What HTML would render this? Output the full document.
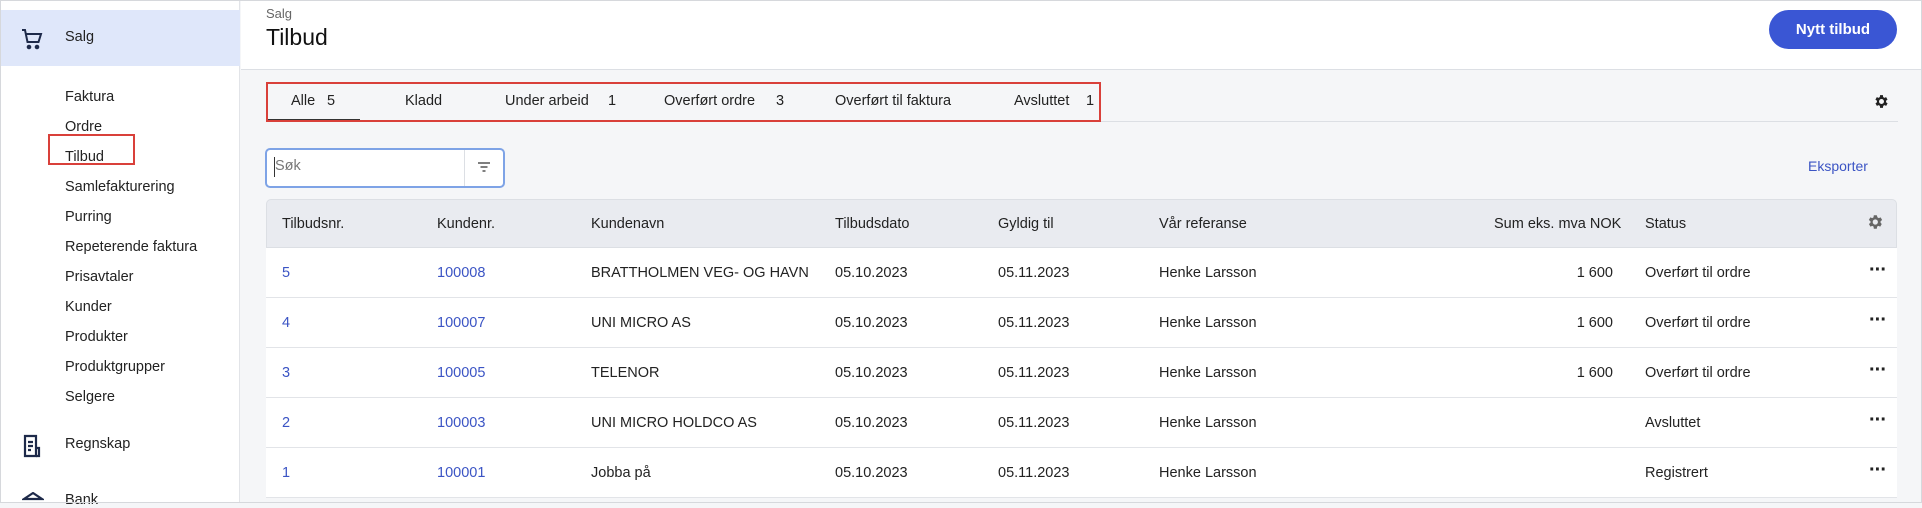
<!DOCTYPE html>
<html><head><meta charset="utf-8"><style>
*{box-sizing:border-box;margin:0;padding:0}
body{width:1922px;height:503px;overflow:hidden;font-family:"Liberation Sans",sans-serif;background:#f5f6f8;color:#222;position:relative;font-size:14.5px}
.abs{position:absolute;white-space:nowrap}
.side{position:absolute;left:0;top:0;width:240px;height:503px;background:#fff;border-right:1px solid #e2e4e8}
.main-head{position:absolute;left:241px;top:0;right:0;height:70px;background:#fff;border-bottom:1px solid #dcdfe4}
.link{color:#3b54c4}
.row{position:absolute;left:266px;width:1631px;height:50px;background:#fff;border-bottom:1px solid #e2e4e8}
.row span{position:absolute;top:17px}
.row span.dots{left:1603px;top:15px;font-size:20px;font-weight:bold;letter-spacing:-1px;line-height:14px}
</style></head><body>
<div style="position:absolute;inset:0;border:1px solid #d6d8dc;z-index:10;pointer-events:none"></div>
<div class="side">
 <div style="position:absolute;left:0;top:10px;width:240px;height:56px;background:#dfe7fa"></div>
 <svg class="abs" style="left:20px;top:27px" width="24" height="24" viewBox="0 0 24 24" fill="none" stroke="#1e2a4a" stroke-width="2"><path d="M2 3h3l2.5 12h11L21 7H6.5"/><path d="M7 15h12"/><circle cx="9" cy="20" r="1.3" fill="#1e2a4a"/><circle cx="17" cy="20" r="1.3" fill="#1e2a4a"/></svg>
 <div class="abs" style="left:65px;top:29px">Salg</div>
 <div class="abs" style="left:65px;top:82px;line-height:30px">Faktura<br>Ordre<br>Tilbud<br>Samlefakturering<br>Purring<br>Repeterende faktura<br>Prisavtaler<br>Kunder<br>Produkter<br>Produktgrupper<br>Selgere</div>
 <div class="abs" style="left:48px;top:134px;width:87px;height:31px;border:2px solid #d9403a"></div>
 <svg class="abs" style="left:22px;top:434px" width="20" height="24" viewBox="0 0 20 24" fill="none" stroke="#1e2a4a" stroke-width="2.2"><path d="M3 2h11v20H3z"/><path d="M6 8h5M6 12h5M6 16h3M14 14h3v8h-3"/></svg>
 <div class="abs" style="left:65px;top:436px">Regnskap</div>
 <svg class="abs" style="left:22px;top:492px" width="22" height="12" viewBox="0 0 22 12"><path d="M11 1L2 7h18z" fill="none" stroke="#1e2a4a" stroke-width="2.2"/></svg>
 <div class="abs" style="left:65px;top:492px">Bank</div>
</div>
<div class="main-head">
 <div class="abs" style="left:25px;top:6px;font-size:13px;color:#666">Salg</div>
 <div class="abs" style="left:25px;top:24px;font-size:23px;color:#111">Tilbud</div>
 <div class="abs" style="left:1528px;top:10px;width:128px;height:39px;border-radius:20px;background:#3a56d4;color:#fff;font-weight:bold;font-size:15px;text-align:center;line-height:39px">Nytt tilbud</div>
</div>
<div class="abs" style="left:266px;top:121px;width:1632px;border-top:1px solid #dcdfe4"></div>
<div class="abs" style="left:266px;top:119px;width:94px;border-top:2px solid #333"></div>
<div class="abs" style="left:266px;top:82px;width:835px;height:40px;border:2px solid #d9403a"></div>
<div class="abs" style="top:93px;left:291px">Alle</div><div class="abs" style="top:93px;left:327px">5</div>
<div class="abs" style="top:93px;left:405px">Kladd</div>
<div class="abs" style="top:93px;left:505px">Under arbeid</div><div class="abs" style="top:93px;left:608px">1</div>
<div class="abs" style="top:93px;left:664px">Overført ordre</div><div class="abs" style="top:93px;left:776px">3</div>
<div class="abs" style="top:93px;left:835px">Overført til faktura</div>
<div class="abs" style="top:93px;left:1014px">Avsluttet</div><div class="abs" style="top:93px;left:1086px">1</div>
<svg class="abs" style="left:1873px;top:93px" width="17" height="17" viewBox="0 0 24 24"><path fill="#222" d="M19.4 13a7.5 7.5 0 0 0 0-2l2.1-1.6-2-3.5-2.5 1a7 7 0 0 0-1.7-1L15 3h-4l-.4 2.9a7 7 0 0 0-1.7 1l-2.5-1-2 3.5L6.6 11a7.5 7.5 0 0 0 0 2l-2.1 1.6 2 3.5 2.5-1a7 7 0 0 0 1.7 1L11 21h4l.4-2.9a7 7 0 0 0 1.7-1l2.5 1 2-3.5zM13 15.5a3.5 3.5 0 1 1 0-7 3.5 3.5 0 0 1 0 7z" transform="translate(-1 0)"/></svg>
<div class="abs" style="left:265px;top:148px;width:240px;height:40px;border:2px solid #7ea3e6;border-radius:5px;background:#fff"></div>
<div class="abs" style="left:464px;top:150px;height:36px;border-left:1px solid #dcdfe4"></div>
<div class="abs" style="left:275px;top:158px;color:#777">Søk</div>
<div class="abs" style="left:274px;top:157px;height:20px;border-left:1px solid #333"></div>
<svg class="abs" style="left:476px;top:160px" width="16" height="14" viewBox="0 0 16 14" stroke="#555" stroke-width="1.6"><path d="M2 3h12M4.5 7h7M6.5 11h3"/></svg>
<div class="abs link" style="left:1808px;top:158px;font-size:14px">Eksporter</div>
<div class="abs" style="left:266px;top:199px;width:1631px;height:49px;background:#e9ebf0;border:1px solid #dcdfe4;border-radius:5px 5px 0 0"></div>
<div class="abs" style="top:216px;left:282px">Tilbudsnr.</div>
<div class="abs" style="top:216px;left:437px">Kundenr.</div>
<div class="abs" style="top:216px;left:591px">Kundenavn</div>
<div class="abs" style="top:216px;left:835px">Tilbudsdato</div>
<div class="abs" style="top:216px;left:998px">Gyldig til</div>
<div class="abs" style="top:216px;left:1159px">Vår referanse</div>
<div class="abs" style="top:216px;left:1494px">Sum eks. mva NOK</div>
<div class="abs" style="top:216px;left:1645px">Status</div>
<svg class="abs" style="left:1866px;top:213px" width="18" height="18" viewBox="0 0 24 24"><path fill="#666" d="M19.4 13a7.5 7.5 0 0 0 0-2l2.1-1.6-2-3.5-2.5 1a7 7 0 0 0-1.7-1L14.4 3h-4l-.4 2.9a7 7 0 0 0-1.7 1l-2.5-1-2 3.5L6 11a7.5 7.5 0 0 0 0 2l-2.1 1.6 2 3.5 2.5-1a7 7 0 0 0 1.7 1l.3 2.9h4l.4-2.9a7 7 0 0 0 1.7-1l2.5 1 2-3.5zM12.4 15.5a3.5 3.5 0 1 1 0-7 3.5 3.5 0 0 1 0 7z"/></svg>

<div class="row" style="top:248px"><span class="link" style="left:16px">5</span><span class="link" style="left:171px">100008</span><span style="left:325px">BRATTHOLMEN VEG- OG HAVN</span><span style="left:569px">05.10.2023</span><span style="left:732px">05.11.2023</span><span style="left:893px">Henke Larsson</span><span style="right:284px">1 600</span><span style="left:1379px">Overført til ordre</span><span class="dots">···</span></div>
<div class="row" style="top:298px"><span class="link" style="left:16px">4</span><span class="link" style="left:171px">100007</span><span style="left:325px">UNI MICRO AS</span><span style="left:569px">05.10.2023</span><span style="left:732px">05.11.2023</span><span style="left:893px">Henke Larsson</span><span style="right:284px">1 600</span><span style="left:1379px">Overført til ordre</span><span class="dots">···</span></div>
<div class="row" style="top:348px"><span class="link" style="left:16px">3</span><span class="link" style="left:171px">100005</span><span style="left:325px">TELENOR</span><span style="left:569px">05.10.2023</span><span style="left:732px">05.11.2023</span><span style="left:893px">Henke Larsson</span><span style="right:284px">1 600</span><span style="left:1379px">Overført til ordre</span><span class="dots">···</span></div>
<div class="row" style="top:398px"><span class="link" style="left:16px">2</span><span class="link" style="left:171px">100003</span><span style="left:325px">UNI MICRO HOLDCO AS</span><span style="left:569px">05.10.2023</span><span style="left:732px">05.11.2023</span><span style="left:893px">Henke Larsson</span><span style="left:1379px">Avsluttet</span><span class="dots">···</span></div>
<div class="row" style="top:448px"><span class="link" style="left:16px">1</span><span class="link" style="left:171px">100001</span><span style="left:325px">Jobba på</span><span style="left:569px">05.10.2023</span><span style="left:732px">05.11.2023</span><span style="left:893px">Henke Larsson</span><span style="left:1379px">Registrert</span><span class="dots">···</span></div>
</body></html>
